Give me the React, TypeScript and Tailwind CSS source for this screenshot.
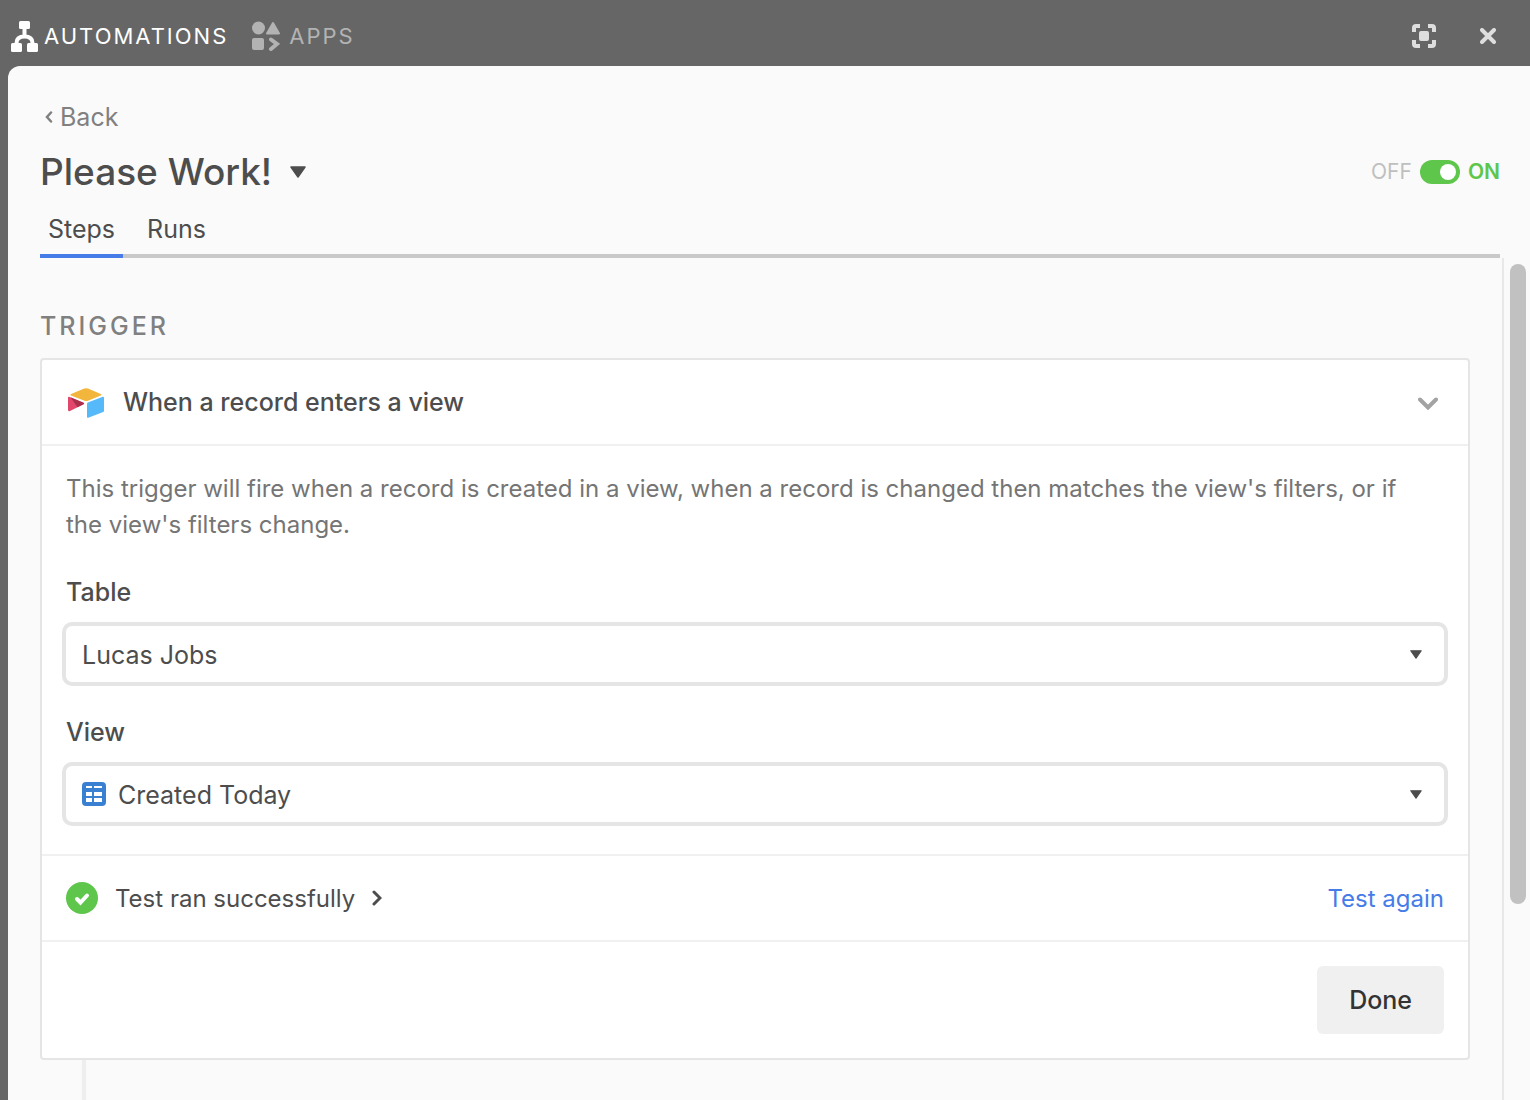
import { useState } from "react";
import type { ReactNode } from "react";

const AutomationsIcon = () => (
    <svg width="28" height="32" viewBox="0 0 28 32" fill="currentColor" aria-hidden="true">
        <rect x="8" y="1" width="11" height="8" rx="1.5" />
        <rect x="0" y="23" width="11" height="9" rx="1.5" />
        <rect x="16" y="23" width="11" height="9" rx="1.5" />
        <path d="M13.500 8v8M5.500 24v-1c0-4.500 3-6.500 8-6.500s8 2 8 6.500v1" fill="none" stroke="currentColor" strokeWidth="4" />
    </svg>
);

const AppsIcon = () => (
    <svg width="28" height="30" viewBox="0 0 28 30" fill="currentColor" aria-hidden="true">
        <circle cx="6.500" cy="7" r="6.500" />
        <path d="M21 2l6 10.500H15z" stroke="currentColor" strokeWidth="2" strokeLinejoin="round" />
        <rect x="0" y="17" width="12" height="12" rx="2" />
        <path d="M19 18.500l6 4.500-6 5" fill="none" stroke="currentColor" strokeWidth="4" strokeLinecap="round" strokeLinejoin="miter" />
    </svg>
);

const ExpandIcon = () => (
    <svg width="24" height="24" viewBox="0 0 24 24" fill="none" stroke="currentColor" strokeWidth="4" aria-hidden="true">
        <path d="M2 8V4a2 2 0 0 1 2-2h4M16 2h4a2 2 0 0 1 2 2v4M22 16v4a2 2 0 0 1-2 2h-4M8 22H4a2 2 0 0 1-2-2v-4" />
        <rect x="7" y="7" width="10" height="10" rx="2" fill="currentColor" stroke="none" />
    </svg>
);

const CloseIcon = () => (
    <svg width="16" height="16" viewBox="0 0 16 16" fill="none" stroke="currentColor" strokeWidth="4" strokeLinecap="round" aria-hidden="true">
        <path d="M2 2l12 12M14 2L2 14" />
    </svg>
);

const Caret = ({ className }: { className: string }) => (
    <svg viewBox="0 0 16 12" fill="currentColor" stroke="currentColor" strokeWidth="1.500" strokeLinejoin="round" className={className} aria-hidden="true">
        <path d="M1 1h14L8 11z" />
    </svg>
);

const AirtableLogo = () => (
    <svg width="36" height="30" viewBox="0 0 36 30" aria-hidden="true">
        <path d="M16.300.5L3 6c-.8.3-.8 1.200 0 1.500l13.500 5.200a5 5 0 0 0 3.500 0l12.800-5.200c.8-.3.800-1.200 0-1.500L20 .5a5 5 0 0 0-3.700 0z" fill="#f2b63c" />
        <path d="M19 15.500v13.400c0 .7.600 1 1.200.8l15-5.700c.5-.2.800-.5.800-1V9.600c0-.7-.6-1-1.200-.8l-15 5.700c-.5.200-.8.500-.8 1z" fill="#56b9fa" />
        <path d="M15.500 16.200L2 22.900c-.9.500-2 .2-2-.8V9.800c0-.8.800-1.200 1.500-.9l14 5.800c.8.300.8 1.100 0 1.500z" fill="#e2476b" />
        <path d="M15.500 16.200l-6 3L2.500 9.300l13 5.400c.8.300.8 1.100 0 1.500z" fill="#a92f4b" />
    </svg>
);

const GridIcon = () => (
    <svg width="24" height="24" viewBox="0 0 24 24" className="shrink-0" aria-hidden="true">
        <rect width="24" height="24" rx="4" fill="#3a80d2" />
        <path d="M4 4h6v2H4zM12 4h8v2h-8zM4 10h6v4H4zM12 10h8v4h-8zM4 16h6v4H4zM12 16h8v4h-8z" fill="#fff" />
    </svg>
);

type SelectFieldProps = {
    id: string;
    label: string;
    options: string[];
    icon?: ReactNode;
};

const SelectField = ({ id, label, options, icon }: SelectFieldProps) => (
    <div>
        <label htmlFor={id} className="block pl-1 leading-9 font-medium">{label}</label>
        <div className="relative mt-3 flex h-16 items-center gap-3 rounded-[10px] border-4 border-[#e5e5e5] bg-white pl-4">
            {icon}
            <select id={id} className="h-full min-w-0 flex-1 appearance-none bg-transparent pt-1 outline-none">
                {options.map((option) => (
                    <option key={option}>{option}</option>
                ))}
            </select>
            <Caret className="pointer-events-none absolute right-[22px] h-[9px] w-3" />
        </div>
    </div>
);

export default function App() {
    const [enabled, setEnabled] = useState(true);

    return (
        <div className="flex min-h-screen flex-col bg-[#666] font-[Inter,sans-serif] text-[25px] text-[#4d4d4d]">
            {/* Top bar */}
            <header className="flex h-[66px] items-center justify-between pt-[6px] pr-[34px] pl-[11px] text-[22px] tracking-[2px]">
                <nav className="flex items-center gap-6">
                    <button type="button" className="flex items-center gap-[5px] text-white">
                        <AutomationsIcon />
                        AUTOMATIONS
                    </button>
                    <button type="button" className="flex items-center gap-[9px] text-[#b3b3b3]">
                        <AppsIcon />
                        APPS
                    </button>
                </nav>
                <div className="flex items-center gap-11 text-[#dedede]">
                    <button type="button" aria-label="Expand"><ExpandIcon /></button>
                    <button type="button" aria-label="Close"><CloseIcon /></button>
                </div>
            </header>

            <main className="ml-2 flex flex-1 flex-col rounded-tl-xl bg-[#fafafa]">
                <div className="pt-[30px] pr-[30px] pl-8">
                    <a href="#back" className="ml-[5px] inline-flex items-center gap-[7px] leading-9 text-[#808080]">
                        <svg width="8" height="12" viewBox="0 0 8 12" fill="none" stroke="currentColor" strokeWidth="2.500" strokeLinecap="round" aria-hidden="true">
                            <path d="M6 1.500L2 6l4 4.500" />
                        </svg>
                        Back
                    </a>

                    <div className="mt-[13px] flex items-center justify-between">
                        <h1>
                            <button type="button" className="flex items-center gap-[18px] text-[37px] leading-[48px] font-medium">
                                Please Work!
                                <Caret className="h-3 w-4" />
                            </button>
                        </h1>
                        <label className="flex items-center gap-2 text-[21px]">
                            <span className="text-[#bfbfbf]">OFF</span>
                            <input
                                type="checkbox"
                                role="switch"
                                checked={enabled}
                                onChange={(e) => setEnabled(e.target.checked)}
                                aria-label="Automation on"
                                className="flex h-6 w-10 appearance-none items-center rounded-full bg-[#bfbfbf] px-1 before:size-4 before:rounded-full before:bg-white checked:justify-end checked:bg-[#5ec64b]"
                            />
                            <span className="font-semibold text-[#5ec64b]">ON</span>
                        </label>
                    </div>

                    {/* Tabs */}
                    <div role="tablist" className="mt-[15px] flex gap-4 border-b-4 border-[#c9c9c9]">
                        <button type="button" role="tab" aria-selected="true" className="-mb-1 border-b-4 border-[#457ce8] px-2 pb-[7px] leading-9">Steps</button>
                        <button type="button" role="tab" aria-selected="false" className="-mb-1 border-b-4 border-transparent px-2 pb-[7px] leading-9">Runs</button>
                    </div>
                </div>

                <div className="flex flex-1">
                    <div className="flex min-w-0 flex-1 flex-col px-8 pt-[50px]">
                        <h2 className="leading-9 font-medium tracking-[3px] text-[#808080]">TRIGGER</h2>

                        <section className="mt-[14px] rounded border-2 border-[#e5e5e5] bg-white">
                            <div className="flex h-[86px] items-center justify-between border-b-2 border-[#f0f0f0] pt-[2px] pr-[30px] pl-[26px]">
                                <div className="flex items-center gap-[19px]">
                                    <AirtableLogo />
                                    <h3 className="font-medium">When a record enters a view</h3>
                                </div>
                                <button type="button" aria-label="Collapse" className="text-[#a3a3a3]">
                                    <svg width="20" height="13" viewBox="0 0 20 13" fill="none" stroke="currentColor" strokeWidth="4" strokeLinecap="round" aria-hidden="true">
                                        <path d="M2 2.500l8 8 8-8" />
                                    </svg>
                                </button>
                            </div>

                            <div className="space-y-7 border-b-2 border-[#f0f0f0] px-5 pt-[25px] pb-7">
                                <p className="mb-[31px] pr-6 pl-1 text-2xl leading-9 text-[#757575]">
                                    This trigger will fire when a record is created in a view, when a record is changed then matches the view's filters, or if the view's filters change.
                                </p>
                                <SelectField id="table" label="Table" options={["Lucas Jobs"]} />
                                <SelectField id="view" label="View" options={["Created Today"]} icon={<GridIcon />} />
                            </div>

                            <div className="flex h-[86px] items-center justify-between border-b-2 border-[#f0f0f0] px-6 text-2xl">
                                <button type="button" className="flex items-center gap-[17px]">
                                    <svg width="32" height="32" viewBox="0 0 32 32" fill="none" aria-hidden="true">
                                        <circle cx="16" cy="16" r="16" fill="#5ec64b" />
                                        <path d="M11 17l3.500 3.500L21 13.500" stroke="#fff" strokeWidth="4" strokeLinecap="round" />
                                    </svg>
                                    <span className="pt-[2px]">Test ran successfully</span>
                                    <svg width="10" height="16" viewBox="0 0 10 16" fill="none" stroke="currentColor" strokeWidth="3" strokeLinecap="round" aria-hidden="true">
                                        <path d="M2 2l6 6-6 6" />
                                    </svg>
                                </button>
                                <button type="button" className="pt-[2px] text-[#457ce8]">Test again</button>
                            </div>

                            <div className="flex justify-end p-6">
                                <button type="button" className="h-[68px] rounded-md bg-[#f0f0f0] px-8 pt-[2px] font-medium text-[#333]">Done</button>
                            </div>
                        </section>

                        {/* Connector to the next step */}
                        <div className="ml-[42px] w-1 flex-1 bg-[#eee]" />
                    </div>

                    {/* Scrollbar */}
                    <div className="w-7 border-l-2 border-[#e8e8e8] pt-[6px] pl-[6px]">
                        <div className="h-[640px] w-4 rounded-full bg-[#c1c1c1]" />
                    </div>
                </div>
            </main>
        </div>
    );
}
